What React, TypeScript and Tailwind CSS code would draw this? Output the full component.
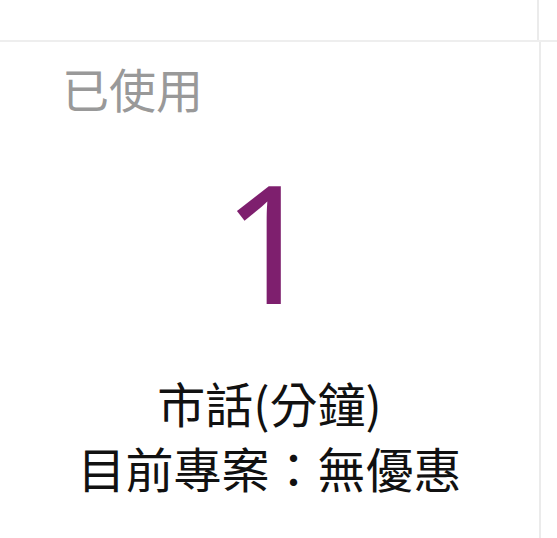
export default function App() {
  return (
    <div className="w-[557px] h-[538px] bg-white flex flex-col overflow-hidden font-['Noto_Sans_CJK_TC','Noto_Sans',sans-serif]">
      {/* top strip */}
      <div className="h-[42px] shrink-0 flex border-b-2 border-[#eeeeee]">
        <div className="w-[539px] border-r-2 border-[#ebebeb]" />
      </div>

      <div className="flex flex-1">
        {/* usage card */}
        <div className="w-[541px] border-r-2 border-[#ebebeb] flex flex-col">
          <div className="pl-[62px] pt-[22px] text-[47px] leading-none text-[#999999]">已使用</div>
          <div className="mt-[47px] text-center font-['Noto_Sans',sans-serif] text-[165px] leading-none text-[#7e1f6e]">1</div>
          <div className="mt-[47px] text-center text-[48px] leading-[65px] text-[#111111]">
            <div>市話(分鐘)</div>
            <div>目前專案：無優惠</div>
          </div>
        </div>
        <div className="flex-1" />
      </div>
    </div>
  );
}
